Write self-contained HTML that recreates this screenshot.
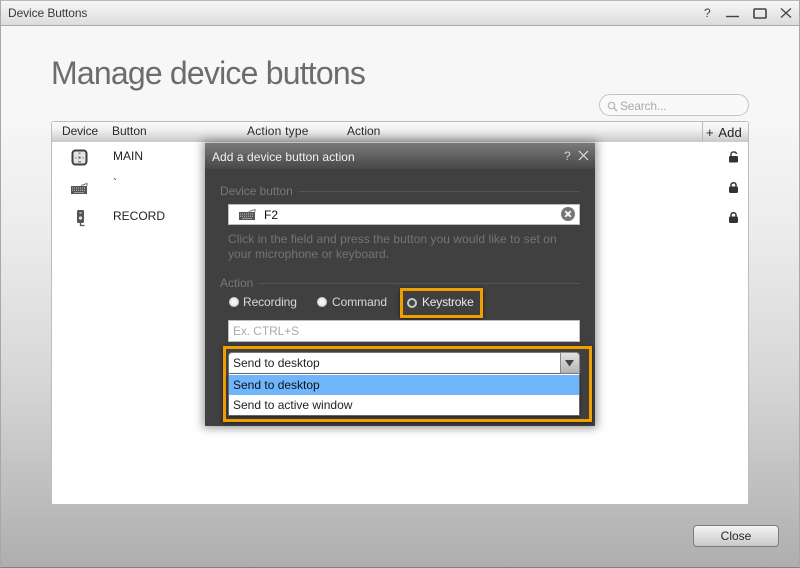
<!DOCTYPE html>
<html><head><meta charset="utf-8">
<style>
html,body{margin:0;padding:0}
body{width:800px;height:568px;position:relative;overflow:hidden;font-family:"Liberation Sans",sans-serif;font-size:12px;color:#222;background:#bbb}
.a{position:absolute;white-space:nowrap}
svg{position:absolute;overflow:visible}
</style></head><body>
<div class="a" style="left:0;top:0;width:800px;height:568px;box-sizing:border-box;border:1px solid #a8a8a8;border-top-color:#b8b8b8;border-bottom-color:#808080;background:linear-gradient(#f7f7f7 0,#f7f7f7 110px,#ececec 230px,#d8d8d8 370px,#aeaeae 568px)"></div>
<div class="a" style="left:1px;top:1px;width:798px;height:24px;background:linear-gradient(#f7f7f7,#dcdcdc);border-bottom:1px solid #aaa"></div>
<div class="a" style="left:8px;top:6px;letter-spacing:-.1px;color:#3a3a3a">Device Buttons</div>
<div class="a" style="left:704px;top:6px;color:#444;font-size:12px">?</div>
<svg style="left:0;top:0" width="800" height="30"><path d="M726 16.5H739" stroke="#444" stroke-width="1.4" fill="none"/><rect x="754" y="9" width="12" height="9" rx="1" fill="none" stroke="#444" stroke-width="1.6"/><path d="M781 8.5L791 17.5M791 8.5L781 17.5" stroke="#444" stroke-width="1.3" fill="none"/></svg>

<div class="a" style="left:51px;top:54px;font-size:32px;line-height:38px;color:#6c6c6c;letter-spacing:-.8px">Manage device buttons</div>

<div class="a" style="left:599px;top:94px;width:148px;height:20px;border:1px solid #c4c4c4;border-radius:11px;background:#f9f9f9"></div>
<svg style="left:606px;top:101px" width="14" height="14"><circle cx="5.5" cy="4.5" r="3.2" fill="none" stroke="#b5b5b5" stroke-width="1.2"/><path d="M8 7L11 10" stroke="#b5b5b5" stroke-width="1.5"/></svg>
<div class="a" style="left:620px;top:99px;color:#aaa;letter-spacing:-.2px">Search...</div>

<div class="a" style="left:51px;top:121px;width:698px;height:383px;box-sizing:border-box;background:#fff;border:1px solid #bdbdbd;border-bottom:0;border-radius:3px 3px 2px 2px"></div>
<div class="a" style="left:52px;top:122px;width:696px;height:20px;background:linear-gradient(#fafafa 0,#f2f2f2 35%,#c9c9c9 100%);border-radius:2px 2px 0 0"></div>
<div class="a" style="left:702px;top:122px;width:1px;height:20px;background:#bbb"></div>
<div class="a" style="left:62px;top:124px;color:#2a2a2a;letter-spacing:-.1px">Device</div>
<div class="a" style="left:112px;top:124px;color:#2a2a2a">Button</div>
<div class="a" style="left:247px;top:124px;color:#2a2a2a;letter-spacing:.2px">Action type</div>
<div class="a" style="left:347px;top:124px;color:#2a2a2a">Action</div>
<div class="a" style="left:706px;top:125px;font-size:13px;color:#222;letter-spacing:.1px">+&nbsp;<span style="margin-left:1px">Add</span></div>

<svg style="left:71px;top:149px" width="18" height="17"><rect x="1.5" y="1.5" width="14" height="14" rx="3" fill="#e4e4e4" stroke="#3f3f3f" stroke-width="2"/><rect x="7.5" y="3.5" width="2" height="1.5" fill="#888"/><rect x="7" y="12" width="3" height="1.5" fill="#888"/><circle cx="8.5" cy="8.5" r="1.3" fill="#777"/><rect x="4" y="8" width="1.5" height="1.5" fill="#999"/><rect x="11.5" y="8" width="1.5" height="1.5" fill="#999"/></svg>
<div class="a" style="left:113px;top:149px;color:#222">MAIN</div>

<svg style="left:71px;top:182px" width="17" height="12"><path d="M0 4H16V12H0Z" fill="#555"/><path d="M1 6H15M1 8.3H15" stroke="#c4c4c4" stroke-width="1" stroke-dasharray="1 1"/><path d="M3 10.5H13" stroke="#999"/><path d="M10 3.5L16 1.5V4" stroke="#777" fill="none"/></svg>
<div class="a" style="left:113px;top:176px;color:#222">`</div>

<svg style="left:76px;top:209px" width="10" height="18"><rect x="1" y="1" width="7" height="13" rx="1.2" fill="#555"/><circle cx="4.5" cy="9" r="1.6" fill="#e4e4e4"/><rect x="3.5" y="3" width="2" height="2" fill="#aaa"/><path d="M4.5 14V16.5H8.5" stroke="#555" stroke-width="1.3" fill="none"/></svg>
<div class="a" style="left:113px;top:209px;color:#222">RECORD</div>

<svg style="left:728px;top:150px" width="12" height="14"><path d="M3 6V4C3 1.4 8 1.2 8.5 4" fill="none" stroke="#333" stroke-width="1.4"/><rect x="1" y="6" width="9" height="6.5" rx="1.3" fill="#333"/></svg>
<svg style="left:728px;top:181px" width="12" height="14"><path d="M3 6V4C3 1 8 1 8 4V6" fill="none" stroke="#333" stroke-width="1.5"/><rect x="1" y="5.5" width="9" height="6.5" rx="1.5" fill="#333"/></svg>
<svg style="left:728px;top:211px" width="12" height="14"><path d="M3 6V4C3 1 8 1 8 4V6" fill="none" stroke="#333" stroke-width="1.5"/><rect x="1" y="5.5" width="9" height="6.5" rx="1.5" fill="#333"/></svg>

<div class="a" style="left:693px;top:525px;width:86px;height:22px;box-sizing:border-box;border:1px solid #7c7c7c;border-radius:4px;background:linear-gradient(#f4f4f4,#c9c9c9);text-align:center;line-height:21px;color:#2a2a2a">Close</div>

<!-- dialog -->
<div class="a" style="left:205px;top:143px;width:390px;height:283px;background:#404040;box-shadow:0 0 9px 2px rgba(0,0,0,.4)"></div>
<div class="a" style="left:205px;top:143px;width:390px;height:26px;background:linear-gradient(#7a7a7a,#484848)"></div>
<div class="a" style="left:212px;top:150px;color:#f2f2f2;letter-spacing:.05px">Add a device button action</div>
<div class="a" style="left:564px;top:149px;color:#d8d8d8">?</div>
<svg style="left:578px;top:150px" width="12" height="12"><path d="M1 1L10 10M10 1L1 10" stroke="#e0e0e0" stroke-width="1.2" fill="none"/></svg>

<div class="a" style="left:220px;top:184px;color:#787878;letter-spacing:-.05px">Device button</div>
<div class="a" style="left:299px;top:191px;width:281px;height:1px;background:#555"></div>
<div class="a" style="left:228px;top:204px;width:352px;height:21px;box-sizing:border-box;background:#fff;border:1px solid #bbb"></div>
<svg style="left:239px;top:208px" width="17" height="12"><path d="M0 4H16V12H0Z" fill="#555"/><path d="M1 6H15M1 8.3H15" stroke="#c4c4c4" stroke-width="1" stroke-dasharray="1 1"/><path d="M3 10.5H13" stroke="#999"/><path d="M10 3.5L16 1.5V4" stroke="#777" fill="none"/></svg>
<div class="a" style="left:264px;top:208px;color:#111">F2</div>
<svg style="left:561px;top:207px" width="14" height="14"><circle cx="7" cy="7" r="7" fill="#777"/><path d="M4.3 4.3L9.7 9.7M9.7 4.3L4.3 9.7" stroke="#fff" stroke-width="1.8"/></svg>
<div class="a" style="left:228px;top:232px;color:#747474;line-height:15px;letter-spacing:.06px">Click in the field and press the button you would like to set on<br>your microphone or keyboard.</div>

<div class="a" style="left:220px;top:276px;color:#787878">Action</div>
<div class="a" style="left:259px;top:283px;width:321px;height:1px;background:#555"></div>

<div class="a" style="left:229px;top:297px;width:10px;height:10px;border-radius:50%;background:radial-gradient(#f4f4f4 35%,#aaa 100%)"></div>
<div class="a" style="left:243px;top:295px;color:#d8d8d8;letter-spacing:-.1px">Recording</div>
<div class="a" style="left:317px;top:297px;width:10px;height:10px;border-radius:50%;background:radial-gradient(#f4f4f4 35%,#aaa 100%)"></div>
<div class="a" style="left:332px;top:295px;color:#d8d8d8;letter-spacing:-.05px">Command</div>
<div class="a" style="left:400px;top:288px;width:83px;height:30px;box-sizing:border-box;border:3px solid #f09f00;box-shadow:0 1px 4px rgba(0,0,0,.5)"></div>
<div class="a" style="left:407px;top:298px;width:10px;height:10px;box-sizing:border-box;border-radius:50%;border:2.5px solid #c8c8c8;background:#444"></div>
<div class="a" style="left:422px;top:295px;color:#e8e8e8;letter-spacing:-.2px">Keystroke</div>

<div class="a" style="left:228px;top:320px;width:352px;height:22px;box-sizing:border-box;background:#fff;border:1px solid #bbb"></div>
<div class="a" style="left:233px;top:324px;color:#aaa;letter-spacing:-.1px">Ex. CTRL+S</div>

<div class="a" style="left:223px;top:346px;width:369px;height:76px;box-sizing:border-box;border:3px solid #f09f00;box-shadow:0 1px 4px rgba(0,0,0,.5)"></div>
<div class="a" style="left:228px;top:352px;width:352px;height:22px;box-sizing:border-box;background:#fff;border:1px solid #777;border-radius:4px 4px 0 0"></div>
<div class="a" style="left:560px;top:352px;width:20px;height:22px;box-sizing:border-box;background:linear-gradient(#e2e2e2,#b4b4b4);border:1px solid #888;border-radius:0 4px 0 0"></div>
<svg style="left:565px;top:360px" width="10" height="7"><path d="M0 0H9L4.5 6.5Z" fill="#444"/></svg>
<div class="a" style="left:233px;top:356px;color:#222">Send to desktop</div>
<div class="a" style="left:228px;top:374px;width:352px;height:42px;box-sizing:border-box;background:#fff;border:1px solid #666;border-top:0;box-shadow:0 1px 3px rgba(0,0,0,.5)"></div>
<div class="a" style="left:229px;top:375px;width:350px;height:20px;background:#6fb5fc"></div>
<div class="a" style="left:233px;top:378px;color:#111">Send to desktop</div>
<div class="a" style="left:233px;top:398px;color:#222">Send to active window</div>
</body></html>
